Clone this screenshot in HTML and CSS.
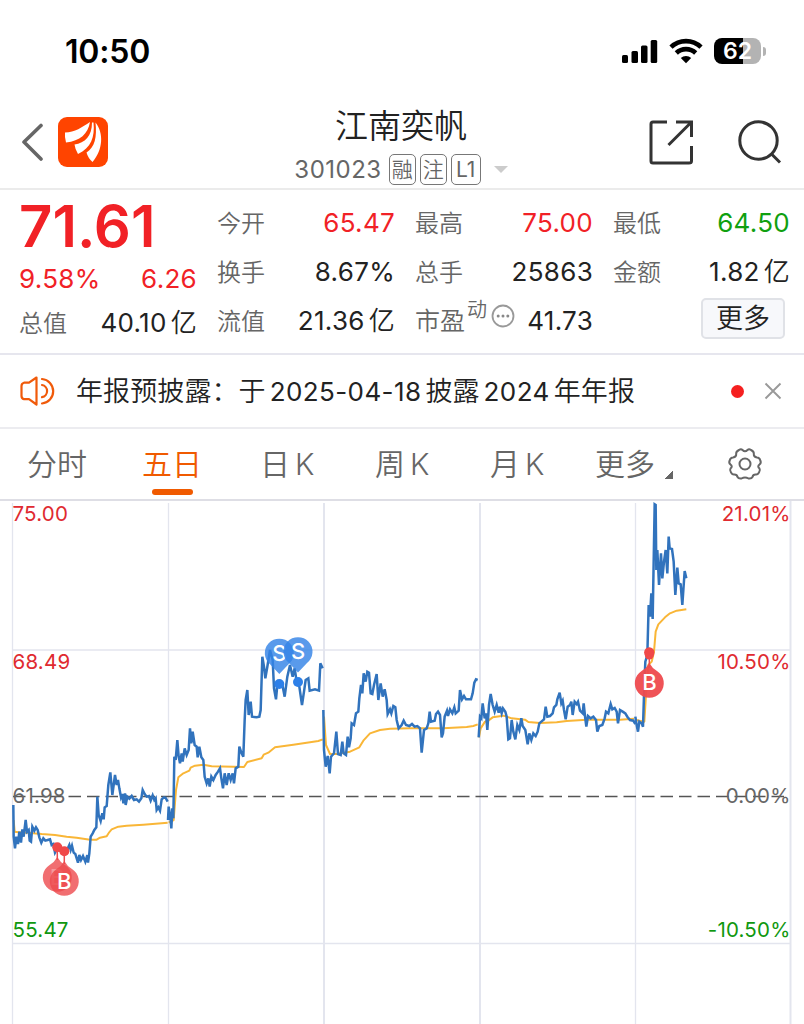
FILE: index.html
```html
<!DOCTYPE html>
<html lang="zh-CN">

<head>
    <meta charset="utf-8">
    <meta name="viewport" content="width=device-width, initial-scale=1.0">
    <title>江南奕帆 301023</title>
    <link rel="stylesheet" href="styles.css">
</head>

<body>
    <div class="status-bar">
        <span class="clock">10:50</span>
        <div class="status-icons">
            <svg width="36" height="25" viewBox="0 0 36 25">
                <rect x="0" y="16" width="6" height="8" rx="1.5" />
                <rect x="9.5" y="12" width="6.5" height="12" rx="1.5" />
                <rect x="19" y="6.500" width="6.500" height="17.500" rx="1.5" />
                <rect x="28.700" y="1" width="6.500" height="23" rx="1.5" />
            </svg>
            <svg class="wifi" width="34" height="26" viewBox="0 0 34 26">
                <g fill="none" stroke="#000" stroke-width="4.600">
                    <path d="M2 9.200a21.500 21.500 0 0 1 30 0" />
                    <path d="M7.300 15a14 14 0 0 1 19.400 0" />
                </g>
                <path d="M17 25.200l-5.200-5.200a7.600 7.600 0 0 1 10.400 0z" />
            </svg>
            <div class="battery"><span>62</span></div>
            <i class="battery-cap"></i>
        </div>
    </div>

    <header class="header">
        <div class="header-left">
            <svg width="24" height="38" viewBox="0 0 24 38">
                <path d="M21 2.500L4 19l17 17" fill="none" stroke="#666" stroke-width="3.600" stroke-linecap="round" stroke-linejoin="round" />
            </svg>
            <svg class="logo" width="50" height="50" viewBox="0 0 50 50">
                <rect width="50" height="50" rx="9" fill="#ff4400" />
                <g fill="#fff">
                    <path d="M7 15.500C17 15.500 24 10 32 5C30 17 22 24 8 25.500Q6.500 20 7 15.500z" />
                    <path d="M34 5.500C34 19 27 26 16.500 27.500Q17 32 20 37C33 31 37 20 35.500 5.500z" />
                    <path d="M37.500 5.500C39 20 37 30 28.500 35.500Q30 41 34.500 45C45 33 46 16 37.500 5.500z" />
                </g>
            </svg>
        </div>
        <div class="stock">
            <h1>江南奕帆</h1>
            <div class="stock-code">
                <span class="code">301023</span>
                <span class="tag">融</span>
                <span class="tag">注</span>
                <span class="tag tag-l1">L1</span>
                <i class="arrow-down"></i>
            </div>
        </div>
        <div class="header-right">
            <svg width="46" height="46" viewBox="0 0 46 46" fill="none" stroke="#333" stroke-width="3">
                <path d="M19 3H5Q3 3 3 5V42Q3 44 5 44H41Q43.500 44 43.500 42V27" />
                <path d="M28 3H43.500V18M43 3.500L20.500 26" />
            </svg>
            <svg class="search" width="46" height="46" viewBox="0 0 46 46" fill="none" stroke="#333" stroke-width="3">
                <circle cx="21.500" cy="21.500" r="18.700" />
                <path d="M34 34.500l9 9" />
            </svg>
        </div>
    </header>

    <section class="quote">
        <div class="quote-price">
            <strong>71.61</strong>
            <div class="pair up"><b>9.58%</b><b>6.26</b></div>
            <div class="pair"><span>总值</span><b>40.10<em>亿</em></b></div>
        </div>
        <div class="quote-col">
            <div class="pair"><span>今开</span><b class="up">65.47</b></div>
            <div class="pair"><span>换手</span><b>8.67%</b></div>
            <div class="pair"><span>流值</span><b>21.36<em>亿</em></b></div>
        </div>
        <div class="quote-col">
            <div class="pair"><span>最高</span><b class="up">75.00</b></div>
            <div class="pair"><span>总手</span><b>25863</b></div>
            <div class="pair pe">
                <span>市盈<sup>动</sup></span>
                <svg width="24" height="24" viewBox="0 0 24 24">
                    <circle cx="12" cy="12" r="10.500" fill="none" stroke="#999" stroke-width="1.800" />
                    <g fill="#888"><circle cx="7.200" cy="12" r="1.500" /><circle cx="12" cy="12" r="1.500" /><circle cx="16.800" cy="12" r="1.500" /></g>
                </svg>
                <b>41.73</b>
            </div>
        </div>
        <div class="quote-col">
            <div class="pair"><span>最低</span><b class="down">64.50</b></div>
            <div class="pair"><span>金额</span><b>1.82<em>亿</em></b></div>
            <button type="button" class="more-btn">更多</button>
        </div>
    </section>

    <section class="notice">
        <svg width="36" height="32" viewBox="0 0 36 32" fill="none" stroke="#f05a0a" stroke-width="2.200" stroke-linejoin="round" stroke-linecap="round">
            <path d="M16.500 2.500L9 7.700H4Q1.500 8.500 1.500 11V21Q1.500 23.500 4 24.200H9L16.500 29.500z" />
            <path d="M22 4a12.300 12.300 0 0 1 0 24.500M22 10a6.200 6.200 0 0 1 0 12.200" />
        </svg>
        <p>年报预披露：于<i>2025-04-18</i>披露<i>2024</i>年年报</p>
        <span class="dot"></span>
        <svg class="close" width="18" height="18" viewBox="0 0 18 18" stroke="#999" stroke-width="1.900">
            <path d="M1.500 1.500l15 15M16.500 1.500l-15 15" />
        </svg>
    </section>

    <nav class="tabs">
        <a class="tab">分时</a>
        <a class="tab active">五日</a>
        <a class="tab tab-k">日<i>K</i></a>
        <a class="tab tab-k">周<i>K</i></a>
        <a class="tab tab-k">月<i>K</i></a>
        <a class="tab tab-more">更多</a>
        <i class="corner"></i>
        <svg class="gear" width="36" height="34" viewBox="0 0 36 34" fill="none" stroke="#666" stroke-width="2">
            <path d="M12 3Q14 1.500 15.500 3Q18 5.500 20.500 3Q22 1.500 24 3Q27 4.500 26.800 6.500Q26.500 10 30 10.500Q32.500 10.500 33.300 13.500Q34.500 16 32.500 17.500Q30 19.500 32.500 21.500Q33.500 23 32 25.500Q30.500 28 28.500 27.500Q26 27.500 25.500 30Q24.500 32 21.500 31.500Q18 29.500 14.500 31.500Q11.500 32 10.500 30Q10 27.500 7.500 27.500Q5.500 28 4 25.500Q2.500 23 3.500 21.500Q6 19.500 3.500 17.500Q1.500 16 2.700 13.500Q3.500 10.500 6 10.500Q9.500 10 9.200 6.500Q9 4.500 12 3z" />
            <circle cx="18" cy="17" r="5.500" />
        </svg>
    </nav>

    <svg class="chart" width="804" height="523" viewBox="0 501 804 523">
        <g class="grid">
            <path d="M12.500 503V1024M168.500 503V1024M635.500 503V1024" />
            <path class="thick" d="M324 503V1024M480 503V1024M790.500 501V1024" />
            <path d="M12 650H790M12 943.500H790" />
        </g>
        <path class="base-line" d="M13 796.500H790" />

        <!-- average price, one path per day -->
        <g class="avg">
            <path transform="translate(0 720) scale(.33333)" d="M41 300L44 335C60 338 100 338 125 342L165 345L200 350L230 353L270 359L290 359L300 353L320 349Q328 335 335 328L355 320L380 317L430 314L503 308" />
            <path transform="translate(160 620) scale(.33333)" d="M26 608L41 600L48 510L55 472L70 460L88 452L92 443L105 437L130 434L155 439L252 441L262 426L305 415L311 404L325 398L345 382L400 374L475 363L488 358" />
            <path transform="translate(310 650) scale(.33333)" d="M42 200L48 285L60 312L80 312L120 305L148 292L160 272L180 250L210 240L240 236L300 235L400 235L470 231L490 228L503 223" />
            <path transform="translate(470 650) scale(.33333)" d="M27 262L32 235L45 215L55 212L68 202L100 197L125 205L165 209L175 216L210 219L260 217L290 213L350 209L450 209L492 206" />
            <path transform="translate(610 495) scale(.33333)" d="M78 675L103 680L108 600L115 510L125 500L132 470L137 410L145 388L165 367L180 355L200 347L229 343" />
        </g>

        <!-- price, one path per day -->
        <g class="price">
            <path transform="translate(0 720) scale(.33333)" d="M40 255L41 350L45 385L49 350L54 372L58 335L63 368L67 328L71 350L77 300L81 335L86 330L89 362L93 365L97 320L103 332L108 322L113 330L118 352L124 368L130 355L136 362L143 360L150 358L155 375L160 372L165 398L172 385L180 392L190 388L200 392L208 375L212 390L216 377L221 398L226 402L231 418L234 428L238 405L243 420L249 408L256 425L262 405L264 428L268 400L272 350L278 340L283 330L289 322L292 230L296 285L302 303L307 280L311 298L314 262L320 258L325 195L331 157L337 225L345 165L350 195L354 180L358 205L363 232L367 222L370 250L375 220L377 255L382 230L388 236L395 228L402 240L410 238L417 245L424 235L428 210L434 222L440 230L447 228L452 242L458 226L463 240L467 235L470 270L475 262L480 272L485 238L492 232L497 234L503 245" />
            <path transform="translate(160 620) scale(.33333)" d="M24 600L26 560L31 590L34 625L37 565L40 595L43 410L47 420L52 360L56 410L60 430L65 400L68 425L74 385L80 405L86 390L90 325L94 370L98 335L104 375L110 380L113 412L118 380L124 412L130 420L134 470L140 490L145 475L149 500L154 470L160 480L167 465L174 455L180 445L184 475L189 505L194 460L200 495L206 460L212 480L218 460L222 490L227 445L235 440L238 380L244 398L250 410L254 300L257 240L262 210L266 285L272 245L276 290L290 292L298 290L302 270L307 110L312 140L316 175L322 140L330 90L338 120L342 205L348 238L352 195L358 190L366 188L374 230L382 170L390 135L398 170L404 145L410 185L418 200L426 255L432 215L437 180L445 175L449 212L465 208L477 212L481 130L488 145" />
            <path transform="translate(310 650) scale(.33333)" d="M40 180L42 300L47 350L53 318L59 370L63 320L72 310L79 245L84 312L92 315L97 275L101 310L108 315L113 260L117 292L122 265L125 220L132 225L138 190L145 185L148 145L153 105L157 130L161 70L167 95L172 65L177 68L182 130L187 132L192 105L200 72L205 150L212 100L218 140L224 118L230 150L233 192L240 178L244 190L250 168L256 172L260 210L266 235L275 225L281 212L288 225L298 228L306 222L314 230L322 228L330 235L335 308L342 240L350 235L355 220L359 185L363 215L374 212L378 192L384 185L390 195L395 262L399 250L404 200L411 182L414 198L420 178L427 190L433 172L437 190L446 182L450 120L456 148L462 138L468 148L483 148L488 130L493 98L498 88L503 90" />
            <path transform="translate(470 650) scale(.33333)" d="M26 262L30 200L34 205L38 160L44 205L48 190L52 240L57 165L62 132L68 165L74 185L80 165L86 188L90 170L95 190L99 175L106 185L110 200L115 268L120 265L125 210L130 245L136 268L142 225L148 240L154 205L158 228L166 240L173 283L178 250L184 270L190 250L197 258L203 245L208 220L214 215L222 208L227 170L232 200L240 198L248 190L252 172L259 165L262 148L269 128L274 160L278 152L282 180L287 208L293 170L300 165L304 155L308 195L314 155L320 162L324 155L330 182L338 190L341 160L345 198L349 230L354 198L362 205L370 200L378 210L382 245L388 228L397 225L404 205L408 185L415 190L422 162L427 178L434 174L440 185L444 220L450 180L458 185L466 190L472 200L480 210L490 212L496 222" />
            <path transform="translate(610 495) scale(.33333)" d="M76 665L80 690L84 710L88 680L95 685L99 695L103 570L106 500L112 480L116 330L120 365L124 295L128 372L131 200L134 28L137 30L139 225L142 165L147 270L153 175L157 250L162 200L167 165L172 235L176 125L179 160L186 162L191 200L196 300L202 218L206 265L212 268L217 330L224 228L229 250" />
        </g>

        <!-- trade markers -->
        <g class="buy">
            <circle class="point" cx="57.300" cy="847.300" r="5" />
            <path class="pin" d="M57.300 857Q60 862 65 865A14.500 14.500 0 1 1 49.600 865Q54.600 862 57.300 857z" />
            <text class="hidden-mark" x="57.300" y="885">B</text>
            <circle class="point" cx="64.300" cy="851.300" r="5" />
            <path class="stem" d="M57.300 850V860M64.300 854V864" />
            <path class="pin" d="M64.300 861Q67 866 72 869A14.500 14.500 0 1 1 56.600 869Q61.600 866 64.300 861z" />
            <text x="64.300" y="889">B</text>
            <circle class="point" cx="649.300" cy="652.500" r="5.200" />
            <circle class="point" cx="649.300" cy="655" r="4.500" />
            <path class="stem" d="M649.300 656V668" />
            <path class="pin solid" d="M649.300 663Q652 668 657 671A14.500 14.500 0 1 1 641.600 671Q646.600 668 649.300 663z" />
            <text x="649.500" y="690">B</text>
        </g>
        <g class="sell">
            <circle class="point" cx="279.300" cy="684" r="5" />
            <path class="pin" d="M279.300 674L270.300 664.500A14.500 14.500 0 1 1 288.300 664.500z" />
            <text x="279.300" y="661">S</text>
            <circle class="point" cx="298" cy="682" r="5" />
            <path class="pin" d="M298 672.500L289 663A14.500 14.500 0 1 1 307 663z" />
            <text x="298" y="659">S</text>
        </g>

        <g class="axis">
            <text class="up" x="12.500" y="521">75.00</text>
            <text class="up" x="12.500" y="669">68.49</text>
            <text class="mid" x="12.500" y="803">61.98</text>
            <text class="down" x="12.500" y="937">55.47</text>
        </g>
        <g class="axis axis-right">
            <text class="up" x="790.500" y="521">21.01%</text>
            <text class="up" x="790.500" y="669">10.50%</text>
            <text class="mid" x="790.500" y="803">0.00%</text>
            <text class="down" x="790.500" y="937">-10.50%</text>
        </g>
    </svg>
</body>

</html>
```

FILE: styles.css
```css
* {
    box-sizing: border-box;
}

body {
    margin: 0;
    width: 804px;
    height: 1024px;
    overflow: hidden;
    background: #fff;
    color: #222;
    font-family: Inter, "Noto Sans CJK SC", sans-serif;
}

i,
em {
    font-style: normal;
}

svg {
    display: block;
    flex: none;
}

.up {
    color: #f12126;
    fill: #e02a30;
}

.down {
    color: #10a010;
    fill: #109810;
}

/* status bar */
.status-bar {
    display: flex;
    justify-content: space-between;
    align-items: center;
    height: 102px;
    padding: 0 38px 0 65px;
}

.clock {
    font-size: 32px;
    font-weight: 600;
    letter-spacing: -0.2px;
    color: #000;
}

.status-icons {
    display: flex;
    align-items: center;
}

.wifi {
    margin: 0 11px;
}

.battery {
    width: 47px;
    height: 26px;
    border-radius: 8px;
    background: linear-gradient(90deg, #000 62%, #b3b3b3 62%);
    color: #fff;
    font-size: 23px;
    font-weight: 600;
    line-height: 26px;
    text-align: center;
}

.battery-cap {
    width: 3px;
    height: 9px;
    margin-left: 2px;
    border-radius: 0 4px 4px 0;
    background: #b3b3b3;
}

/* header */
.header {
    display: grid;
    grid-template-columns: 200px 1fr 200px;
    height: 88px;
    border-bottom: 2px solid #ebebeb;
}

.header-left {
    display: flex;
    align-items: center;
    height: 79px;
    padding-left: 20px;
    gap: 14px;
}

.stock {
    display: flex;
    flex-direction: column;
    align-items: center;
}

.stock h1 {
    margin: 0 2px 0 0;
    font-size: 33px;
    font-weight: 350;
    line-height: 48px;
    color: #222;
}

.stock-code {
    display: flex;
    align-items: center;
    height: 38px;
    gap: 4px;
    margin-right: 2px;
    color: #666;
}

.code {
    font-size: 24px;
    letter-spacing: 0.500px;
    margin-right: 3px;
}

.tag {
    width: 27px;
    height: 31px;
    border: 1.500px solid #777;
    border-radius: 5px;
    font-size: 21px;
    font-weight: 350;
    line-height: 29px;
    text-align: center;
}

.tag-l1 {
    width: 30px;
    font-weight: 400;
}

.arrow-down {
    margin-left: 9px;
    border: 7.500px solid transparent;
    border-top-color: #ccc;
    border-bottom: 0;
}

.header-right {
    display: flex;
    align-items: center;
    justify-content: flex-end;
    height: 80px;
    padding-right: 21px;
    gap: 43px;
}

/* quote */
.quote {
    display: grid;
    grid-template-columns: 178px 178px 178px 177px;
    column-gap: 20px;
    height: 165px;
    padding: 8px 14px 0 19px;
    border-bottom: 2px solid #e6e6ee;
}

.quote-price strong {
    display: block;
    height: 59px;
    line-height: 56px;
    font-size: 58px;
    font-weight: 600;
    color: #f12126;
}

.pair {
    display: flex;
    justify-content: space-between;
    align-items: center;
    height: 49px;
    line-height: 49px;
}

.quote-price .pair {
    height: 44px;
    line-height: 44px;
}

.pair span {
    font-size: 24px;
    font-weight: 350;
    color: #666;
    position: relative;
    top: 1px;
}

.pair b {
    font-size: 26px;
    font-weight: 400;
    letter-spacing: 0.300px;
    white-space: nowrap;
}

.pair em {
    font-weight: 350;
    margin-left: 4px;
}

.pe span {
    font-size: 25px;
}

.pair sup {
    font-size: 20px;
    line-height: 0;
    vertical-align: 13px;
    margin-left: 2px;
}

.pe svg {
    margin: -9px 1px 0 -8px;
}

.more-btn {
    display: block;
    width: 84px;
    height: 41px;
    margin: 2px 5px 0 auto;
    padding: 0;
    border: 2px solid #e0e2e7;
    border-radius: 5px;
    background: #f7f8fb;
    font-family: inherit;
    font-size: 27px;
    font-weight: 350;
    line-height: 38px;
    color: #222;
}

/* notice */
.notice {
    display: flex;
    align-items: center;
    height: 74px;
    padding: 0 22px 0 20px;
    border-bottom: 2px solid #ececf0;
}

.notice p {
    flex: 1;
    margin: -3px 0 0 20px;
    font-size: 27px;
    font-weight: 350;
    letter-spacing: 0.100px;
    white-space: nowrap;
}

.notice i {
    margin: 0 4px;
    font-size: 26px;
    font-weight: 400;
    letter-spacing: 0.400px;
}

.dot {
    width: 13px;
    height: 13px;
    border-radius: 50%;
    background: #f52020;
}

.close {
    margin-left: 20px;
}

/* tabs */
.tabs {
    display: flex;
    height: 72px;
    padding-left: 27px;
    border-bottom: 2px solid #dedee5;
    color: #666;
    font-size: 30px;
    font-weight: 350;
    line-height: 70px;
}

.tab {
    width: 61px;
    margin-right: 54px;
    white-space: nowrap;
}

.tab i {
    margin-left: 5px;
    font-size: 30px;
}

.tab-k {
    width: 56px;
    margin-right: 59px;
}

.active {
    margin-right: 57px;
    color: #f05a00;
}

.active::after {
    content: "";
    display: block;
    width: 41px;
    height: 6px;
    margin: -10px auto 0;
    border-radius: 3px;
    background: #f05a00;
}

.tab-more {
    margin: 0 9px 0 -10px;
}

.corner {
    width: 8px;
    height: 8px;
    margin-top: 42px;
    background: linear-gradient(135deg, transparent 50%, #666 50%);
}

.gear {
    margin: 18px 0 0 54px;
}

/* chart */
.grid path {
    fill: none;
    stroke: #e3e5ee;
    stroke-width: 1.300;
}

.grid .thick {
    stroke-width: 2;
}

.base-line {
    stroke: #555;
    stroke-width: 1.300;
    stroke-dasharray: 12.500 6;
}

.avg path,
.price path {
    fill: none;
    stroke: #f9b637;
    stroke-width: 6;
    stroke-linejoin: round;
}

.price path {
    stroke: #3173bd;
    stroke-width: 7.500;
    stroke-linejoin: miter;
}

.axis text {
    font-size: 20.500px;
    letter-spacing: 0.200px;
}

.axis-right text {
    text-anchor: end;
}

.mid {
    fill: #666;
}

.buy text,
.sell text {
    fill: #fff;
    font-size: 22px;
    font-weight: 500;
    text-anchor: middle;
}

.buy .hidden-mark {
    opacity: 0.3;
}

.buy .point {
    fill: #f04848;
}

.buy .pin {
    fill: #ee4a4e;
    opacity: 0.8;
}

.buy .solid {
    opacity: 0.95;
}

.buy .stem {
    stroke: #ee4a4e;
    stroke-width: 1.500;
}

.sell .point {
    fill: #2e80e8;
}

.sell .pin {
    fill: #3484e6;
    opacity: 0.82;
}
```
